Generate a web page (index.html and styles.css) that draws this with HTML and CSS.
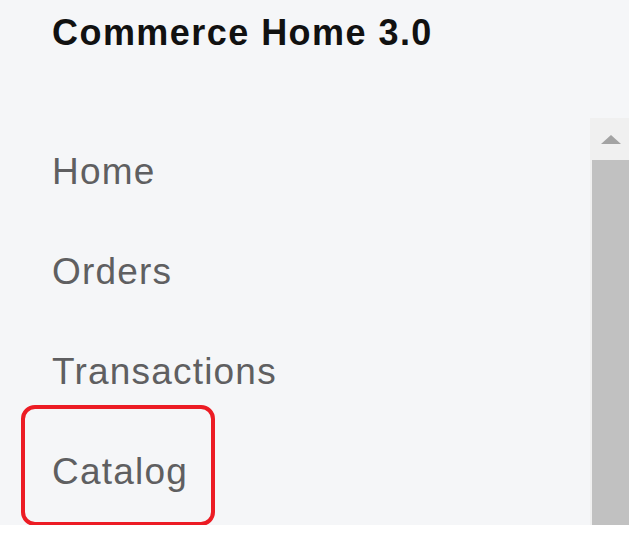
FILE: index.html
```html
<!DOCTYPE html>
<html lang="en">
<head>
<meta charset="utf-8">
<title>Commerce Home 3.0</title>
<link rel="stylesheet" href="styles.css">
</head>
<body>
<div class="app">
  <header class="header">
    <h1 class="title">Commerce Home 3.0</h1>
  </header>
  <div class="panel">
    <nav class="nav">
      <a class="nav-item" href="#">Home</a>
      <a class="nav-item" href="#">Orders</a>
      <a class="nav-item" href="#">Transactions</a>
      <a class="nav-item nav-item--highlight" href="#">Catalog</a>
    </nav>
    <div class="scrollbar">
      <div class="scroll-btn"><span class="arrow-up"></span></div>
      <div class="scroll-thumb"></div>
    </div>
  </div>
</div>
</body>
</html>
```

FILE: styles.css
```css
html, body {
  margin: 0;
  padding: 0;
  background: #ffffff;
}
.app {
  width: 629px;
  background: #f5f6f8;
  font-family: "Liberation Sans", Arial, sans-serif;
}
.header {
  height: 118px;
  padding-left: 52px;
  box-sizing: border-box;
  padding-top: 15px;
}
.title {
  margin: 0;
  font-size: 36px;
  line-height: 36px;
  font-weight: 700;
  color: #111111;
  letter-spacing: 1.45px;
}
.panel {
  display: flex;
  height: 407px;
}
.nav {
  flex: 1;
  display: flex;
  flex-direction: column;
  padding-top: 4px;
  padding-left: 52px;
}
.nav-item {
  display: block;
  height: 100px;
  line-height: 100px;
  font-size: 37px;
  color: #5f5f61;
  text-decoration: none;
  letter-spacing: 1.2px;
  position: relative;
  align-self: flex-start;
}
.nav-item--highlight::after {
  content: "";
  position: absolute;
  left: -31px;
  top: -17px;
  width: 186px;
  height: 113px;
  border: 4.5px solid #ec1c24;
  border-radius: 14px;
}
.scrollbar {
  width: 39px;
  background: #f0f0f0;
  display: flex;
  flex-direction: column;
}
.scroll-btn {
  height: 42px;
  display: flex;
  align-items: center;
  justify-content: center;
  padding-left: 2px;
}
.arrow-up {
  width: 0;
  height: 0;
  border-left: 10px solid transparent;
  border-right: 10px solid transparent;
  border-bottom: 9px solid #a3a3a3;
}
.scroll-thumb {
  flex: 1;
  margin-left: 2px;
  background: #c1c1c1;
}
```
